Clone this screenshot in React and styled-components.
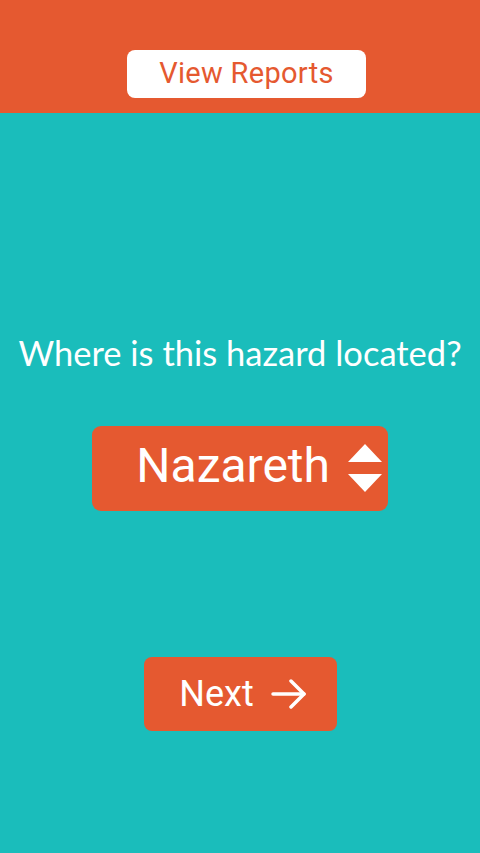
import React from 'react'
import styled, { createGlobalStyle } from 'styled-components'

const orange = '#e55930'
const teal = '#1abdbb'

const GlobalStyle = createGlobalStyle`
    html, body {
        margin: 0;
        padding: 0;
        height: 100%;
    }
    body {
        background: ${teal};
        font-family: Roboto, "Liberation Sans", sans-serif;
    }
    #root {
        height: 100%;
    }
`

const Page = styled.div`
    display: flex;
    flex-direction: column;
    height: 853px;
    background: ${teal};
`

const Header = styled.header`
    display: flex;
    justify-content: center;
    align-items: flex-end;
    height: 113px;
    padding: 0 0 15px 13px;
    box-sizing: border-box;
    background: ${orange};
`

const ReportsBtn = styled.button`
    width: 239px;
    height: 48px;
    border: none;
    border-radius: 8px;
    background: #fff;
    color: ${orange};
    font-family: Roboto, sans-serif;
    font-size: 29px;
    letter-spacing: 0.3px;
    padding: 0 0 3px 0;
`

const Main = styled.main`
    display: flex;
    flex-direction: column;
    align-items: center;
    padding-top: 218px;
`

const Question = styled.h2`
    margin: 0;
    color: #fff;
    font-family: Lato, "Open Sans", sans-serif;
    font-weight: 400;
    font-size: 34.5px;
    line-height: 44px;
`

const Select = styled.div`
    display: flex;
    align-items: center;
    justify-content: flex-end;
    gap: 18px;
    box-sizing: border-box;
    width: 296px;
    height: 85px;
    margin-top: 51px;
    padding: 0 6px 6px 0;
    border-radius: 9px;
    background: ${orange};
    color: #fff;
    font-size: 48px;

    svg {
        margin-top: 6px;
    }
`

const NextBtn = styled.button`
    display: flex;
    align-items: center;
    justify-content: center;
    gap: 17px;
    width: 193px;
    height: 74px;
    margin-top: 146px;
    padding: 0 0 0 6px;
    border: none;
    border-radius: 8px;
    background: ${orange};
    color: #fff;
    font-family: Roboto, sans-serif;
    font-size: 36px;
`

export default function App() {
    return (
        <>
            <GlobalStyle />
            <Page>
                <Header>
                    <ReportsBtn>View Reports</ReportsBtn>
                </Header>
                <Main>
                    <Question>Where is this hazard located?</Question>
                    <Select>
                        <span>Nazareth</span>
                        <svg width="34" height="50" viewBox="0 0 34 50">
                            <polygon points="17,0 34,18 0,18" fill="#fff" />
                            <polygon points="0,30 34,30 17,48" fill="#fff" />
                        </svg>
                    </Select>
                    <NextBtn>
                        <span>Next</span>
                        <svg width="36" height="30" viewBox="0 0 36 30" fill="none" stroke="#fff" strokeWidth="3.5" strokeLinecap="round" strokeLinejoin="round">
                            <path d="M2 15 H33" />
                            <path d="M20 2 L33 15 L20 28" />
                        </svg>
                    </NextBtn>
                </Main>
            </Page>
        </>
    )
}
